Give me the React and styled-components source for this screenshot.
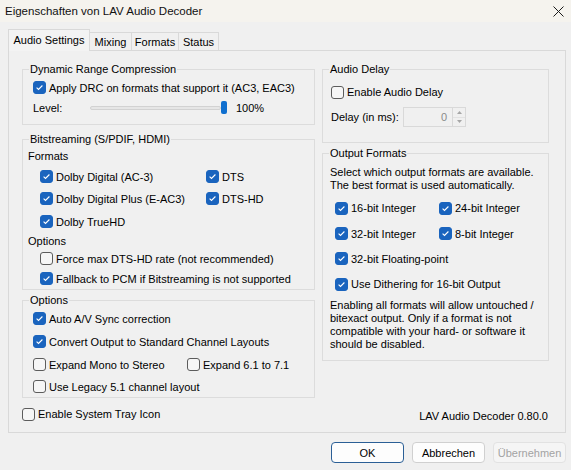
import React from 'react';
import styled, { createGlobalStyle } from 'styled-components';

const Global = createGlobalStyle`
  html, body { margin: 0; padding: 0; background: #f0f0f0; }
  body { font-family: "Liberation Sans", Arial, sans-serif; font-size: 11px; color: #000; }
  * { box-sizing: border-box; }
`;

const Window = styled.div`
  width: 571px; height: 470px; background: #f0f0f0;
  display: flex; flex-direction: column; overflow: hidden;
`;
const TitleBar = styled.div`
  height: 22px; background: #f5f3ee;
  display: flex; align-items: center; justify-content: space-between;
  padding: 0 7px 0 5px;
`;
const Title = styled.span` font-size: 11.5px; line-height: 14px; color: #111; `;
const Body = styled.div`
  padding: 7px 5px 0 8px; display: flex; flex-direction: column;
`;
const TabStrip = styled.div` display: flex; align-items: flex-end; height: 21px; `;
const Tab = styled.div`
  width: ${p => p.$w}px;
  height: ${p => (p.$active ? 22 : 18)}px;
  margin-left: ${p => (p.$first ? 0 : -1)}px;
  margin-bottom: ${p => (p.$active ? -1 : 0)}px;
  border: 1px solid #d9d9d9; border-bottom: none;
  background: ${p => (p.$active ? '#f3f3f3' : '#f0f0f0')};
  display: flex; align-items: center; justify-content: center;
  padding-bottom: ${p => (p.$active ? 2 : 0)}px;
  position: relative; z-index: ${p => (p.$active ? 1 : 0)};
  white-space: nowrap;
`;
const Panel = styled.div`
  height: 383px; border: 1px solid #d9d9d9; background: #f0f0f0;
  padding: 11px 16px 0 13px;
  display: flex; flex-direction: column;
`;
const Columns = styled.div` display: flex; gap: 7px; align-items: flex-start; `;
const Column = styled.div` width: ${p => p.$w}px; display: flex; flex-direction: column; `;
const Group = styled.fieldset`
  margin: ${p => p.$mt || 0}px 0 0 0; padding: 0; min-width: 0;
  border: 1px solid #dcdcdc;
  height: ${p => p.$h}px;
`;
const Legend = styled.legend`
  margin-left: 6px; padding: 0 1px; font-size: 11px; line-height: 14px;
`;
const GroupBody = styled.div`
  padding-left: ${p => p.$pl}px; padding-top: ${p => p.$pt || 0}px;
  display: flex; flex-direction: column;
`;
const Row = styled.div`
  height: ${p => p.$h}px; display: flex; align-items: center;
  padding-left: ${p => p.$indent || 0}px; white-space: nowrap;
  margin-top: ${p => p.$mt || 0}px;
`;
const Cell = styled.div` width: ${p => p.$w}px; display: flex; align-items: center; flex: none; `;
const Text = styled.div`
  line-height: 13px; margin-top: ${p => p.$mt || 0}px; white-space: nowrap;
`;
const BoxEl = styled.span`
  width: 13px; height: 13px; border-radius: 3px; flex: none;
  border: 1px solid ${p => (p.$checked ? '#1a64be' : '#5c5c5c')};
  background: ${p => (p.$checked ? '#1a64be' : '#f6f6f6')};
  display: flex; align-items: center; justify-content: center;
`;
const CheckLabel = styled.span` margin-left: 3px; line-height: 14px; white-space: nowrap; `;
const CheckWrap = styled.span` display: inline-flex; align-items: center; `;

const Check = ({ checked, label }) => (
  <CheckWrap>
    <BoxEl $checked={checked}>
      {checked && (
        <svg width="11" height="11" viewBox="0 0 11 11">
          <path d="M2.6 5.6 L4.5 7.5 L8.4 3.5" fill="none" stroke="#fff" strokeWidth="1.1" />
        </svg>
      )}
    </BoxEl>
    <CheckLabel>{label}</CheckLabel>
  </CheckWrap>
);

const SliderWrap = styled.div` width: 137px; display: flex; align-items: center; `;
const Track = styled.div`
  flex: 1; height: 4px; background: #e6e6e6; border: 1px solid #d2d2d2; border-radius: 2px;
`;
const Thumb = styled.div` width: 6px; height: 13px; background: #0f6fcf; border-radius: 2px; flex: none; `;
const Percent = styled.span` margin-left: 9px; `;

const SpinInput = styled.div`
  width: 50px; height: 20px; border: 1px solid #d9d9d9; background: #f0f0f0;
  color: #8a8a8a; display: flex; align-items: center; justify-content: flex-end;
  padding-right: 5px;
`;
const SpinButtons = styled.div`
  width: 13px; height: 20px; border: 1px solid #d9d9d9; border-left: none;
  display: flex; flex-direction: column;
`;
const SpinHalf = styled.div`
  flex: 1; display: flex; align-items: center; justify-content: center;
  border-top: ${p => (p.$bottom ? '1px solid #e2e2e2' : 'none')};
`;

const Footer = styled.div`
  margin-top: 6px; height: 20px; display: flex; align-items: center; justify-content: space-between;
`;
const Version = styled.span` padding-top: 4px; padding-right: 1px; `;

const ButtonRow = styled.div`
  margin-top: 9px; display: flex; justify-content: flex-end; gap: 8px;
`;
const Button = styled.div`
  width: 73px; height: 21px; border-radius: 4px;
  border: 1px solid ${p => (p.$default ? '#2b5f96' : p.$disabled ? '#e2e2e2' : '#d0d0d0')};
  background: ${p => (p.$disabled ? '#f5f5f5' : '#fdfdfd')};
  color: ${p => (p.$disabled ? '#a3a3a3' : '#000')};
  display: flex; align-items: center; justify-content: center;
`;

export default function App() {
  return (
    <Window>
      <Global />
      <TitleBar>
        <Title>Eigenschaften von LAV Audio Decoder</Title>
        <svg width="11" height="11" viewBox="0 0 11 11">
          <path d="M0.5 0.5 L10.5 10.5 M10.5 0.5 L0.5 10.5" stroke="#1a1a1a" strokeWidth="1" />
        </svg>
      </TitleBar>
      <Body>
        <TabStrip>
          <Tab $active $first $w={82}>Audio Settings</Tab>
          <Tab $w={43}>Mixing</Tab>
          <Tab $w={48}>Formats</Tab>
          <Tab $w={41}>Status</Tab>
        </TabStrip>
        <Panel>
          <Columns>
            <Column $w={293}>
              <Group $h={63}>
                <Legend>Dynamic Range Compression</Legend>
                <GroupBody $pl={10}>
                  <Row $h={23}><Check checked label="Apply DRC on formats that support it (AC3, EAC3)" /></Row>
                  <Row $h={17}>
                    <Cell $w={57}>Level:</Cell>
                    <SliderWrap><Track /><Thumb /></SliderWrap>
                    <Percent>100%</Percent>
                  </Row>
                </GroupBody>
              </Group>
              <Group $h={158} $mt={7}>
                <Legend>Bitstreaming (S/PDIF, HDMI)</Legend>
                <GroupBody $pl={5}>
                  <Row $h={20}>Formats</Row>
                  <Row $h={21} $indent={12}>
                    <Cell $w={166}><Check checked label="Dolby Digital (AC-3)" /></Cell>
                    <Check checked label="DTS" />
                  </Row>
                  <Row $h={23} $indent={12}>
                    <Cell $w={166}><Check checked label="Dolby Digital Plus (E-AC3)" /></Cell>
                    <Check checked label="DTS-HD" />
                  </Row>
                  <Row $h={23} $indent={12}><Check checked label="Dolby TrueHD" /></Row>
                  <Row $h={15}>Options</Row>
                  <Row $h={21} $indent={12}><Check label="Force max DTS-HD rate (not recommended)" /></Row>
                  <Row $h={19} $indent={12}><Check checked label="Fallback to PCM if Bitstreaming is not supported" /></Row>
                </GroupBody>
              </Group>
              <Group $h={105} $mt={3}>
                <Legend>Options</Legend>
                <GroupBody $pl={10}>
                  <Row $h={23}><Check checked label="Auto A/V Sync correction" /></Row>
                  <Row $h={23}><Check checked label="Convert Output to Standard Channel Layouts" /></Row>
                  <Row $h={23}>
                    <Cell $w={154}><Check label="Expand Mono to Stereo" /></Cell>
                    <Check label="Expand 6.1 to 7.1" />
                  </Row>
                  <Row $h={21}><Check label="Use Legacy 5.1 channel layout" /></Row>
                </GroupBody>
              </Group>
            </Column>
            <Column $w={227}>
              <Group $h={81}>
                <Legend>Audio Delay</Legend>
                <GroupBody $pl={8} $pt={5}>
                  <Row $h={22}><Check label="Enable Audio Delay" /></Row>
                  <Row $h={28}>
                    <Cell $w={72}>Delay (in ms):</Cell>
                    <SpinInput>0</SpinInput>
                    <SpinButtons>
                      <SpinHalf>
                        <svg width="5" height="3" viewBox="0 0 5 3"><path d="M0 3 L2.5 0 L5 3 Z" fill="#a6a6a6" /></svg>
                      </SpinHalf>
                      <SpinHalf $bottom>
                        <svg width="5" height="3" viewBox="0 0 5 3"><path d="M0 0 L2.5 3 L5 0 Z" fill="#a6a6a6" /></svg>
                      </SpinHalf>
                    </SpinButtons>
                  </Row>
                </GroupBody>
              </Group>
              <Group $h={215} $mt={3}>
                <Legend>Output Formats</Legend>
                <GroupBody $pl={7} $pt={6}>
                  <Text>Select which output formats are available.<br />The best format is used automatically.</Text>
                  <Row $h={26} $indent={5} $mt={3}>
                    <Cell $w={104}><Check checked label="16-bit Integer" /></Cell>
                    <Check checked label="24-bit Integer" />
                  </Row>
                  <Row $h={25} $indent={5}>
                    <Cell $w={104}><Check checked label="32-bit Integer" /></Cell>
                    <Check checked label="8-bit Integer" />
                  </Row>
                  <Row $h={25} $indent={5}><Check checked label="32-bit Floating-point" /></Row>
                  <Row $h={26} $indent={5}><Check checked label="Use Dithering for 16-bit Output" /></Row>
                  <Text $mt={2}>
                    Enabling all formats will allow untouched /<br />
                    bitexact output. Only if a format is not<br />
                    compatible with your hard- or software it<br />
                    should be disabled.
                  </Text>
                </GroupBody>
              </Group>
            </Column>
          </Columns>
          <Footer>
            <Check label="Enable System Tray Icon" />
            <Version>LAV Audio Decoder 0.80.0</Version>
          </Footer>
        </Panel>
        <ButtonRow>
          <Button $default>OK</Button>
          <Button>Abbrechen</Button>
          <Button $disabled>Übernehmen</Button>
        </ButtonRow>
      </Body>
    </Window>
  );
}
